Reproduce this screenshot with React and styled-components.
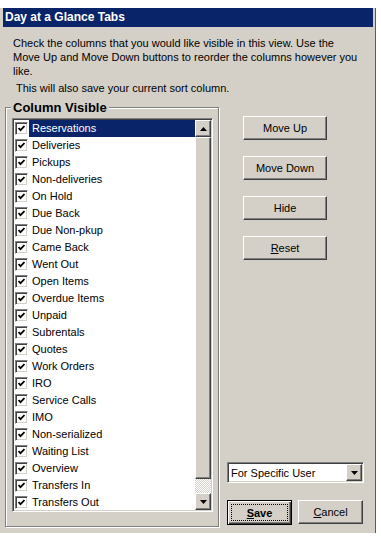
import React from "react";
import styled, { createGlobalStyle } from "styled-components";

const GlobalStyle = createGlobalStyle`
  html, body {
    margin: 0;
    background: #ffffff;
  }
  body {
    font-family: "Liberation Sans", Arial, sans-serif;
    font-size: 11px;
    color: #000;
  }
`;

const columns = [
  "Reservations",
  "Deliveries",
  "Pickups",
  "Non-deliveries",
  "On Hold",
  "Due Back",
  "Due Non-pkup",
  "Came Back",
  "Went Out",
  "Open Items",
  "Overdue Items",
  "Unpaid",
  "Subrentals",
  "Quotes",
  "Work Orders",
  "IRO",
  "Service Calls",
  "IMO",
  "Non-serialized",
  "Waiting List",
  "Overview",
  "Transfers In",
  "Transfers Out",
];

const Dialog = styled.div`
  margin-top: 8px;
  width: 376px;
  height: 525px;
  box-sizing: border-box;
  background: #d4d0c8;
  border-right: 1px solid #5a5a5a;
  display: flex;
  flex-direction: column;
`;

const TitleBar = styled.div`
  margin: 0 2px 0 3px;
  height: 19px;
  padding-left: 2px;
  background: #0a246a;
  color: #fff;
  font-weight: bold;
  font-size: 12px;
  line-height: 19px;
  white-space: nowrap;
`;

const Body = styled.div`
  flex: 1;
  display: flex;
  flex-direction: column;
  padding: 9px 0 6px 5px;
`;

const Intro = styled.p`
  margin: 0 0 0 8px;
  line-height: 14px;
  white-space: nowrap;
`;

const SortNote = styled.p`
  margin: 3px 0 0 11px;
  line-height: 14px;
`;

const MainRow = styled.div`
  flex: 1;
  display: flex;
  margin-top: 5px;
`;

const GroupBox = styled.div`
  position: relative;
  margin-top: 7px;
  width: 214px;
  box-sizing: border-box;
  padding: 10px 5px 14px 6px;
  border: 1px solid #808080;
  box-shadow: inset 1px 1px 0 #fff, 1px 1px 0 #fff;
`;

const GroupTitle = styled.span`
  position: absolute;
  top: -8px;
  left: 5px;
  padding: 0 2px;
  background: #d4d0c8;
  font-weight: bold;
  font-size: 13px;
  line-height: 15px;
`;

const ListBox = styled.div`
  width: 201px;
  height: 394px;
  box-sizing: border-box;
  display: flex;
  background: #fff;
  border: 1px solid;
  border-color: #808080 #fff #fff #808080;
  box-shadow: inset 1px 1px 0 #404040, inset -1px -1px 0 #d4d0c8;
  padding: 1px;
`;

const Items = styled.div`
  flex: 1;
  overflow: hidden;
`;

const Row = styled.div`
  display: flex;
  align-items: center;
  height: 17px;
`;

const CheckBox = styled.span`
  margin-left: 1px;
  width: 13px;
  height: 13px;
  box-sizing: border-box;
  flex: none;
  display: flex;
  align-items: center;
  justify-content: center;
  background: #fff;
  border: 1px solid;
  border-color: #808080 #fff #fff #808080;
  box-shadow: inset 1px 1px 0 #404040, inset -1px -1px 0 #d4d0c8;
`;

const Label = styled.span`
  flex: 1;
  margin-left: 1px;
  height: 17px;
  padding-left: 3px;
  line-height: 17px;
  white-space: nowrap;
  background: ${(p) => (p.$selected ? "#0a246a" : "transparent")};
  color: ${(p) => (p.$selected ? "#fff" : "#000")};
`;

const raised = `
  background: #d4d0c8;
  border: 1px solid;
  border-color: #fff #404040 #404040 #fff;
  box-shadow: inset -1px -1px 0 #808080;
`;

const ScrollBar = styled.div`
  width: 16px;
  display: flex;
  flex-direction: column;
`;

const ArrowButton = styled.div`
  ${raised}
  width: 16px;
  height: ${(p) => p.$h || 17}px;
  box-sizing: border-box;
  flex: none;
  display: flex;
  align-items: center;
  justify-content: center;
`;

const Thumb = styled.div`
  ${raised}
  height: 342px;
  box-sizing: border-box;
  flex: none;
`;

const Track = styled.div`
  flex: 1;
  background: repeating-conic-gradient(#d4d0c8 0 25%, #fff 0 50%) 0 0 / 2px 2px;
`;

const SideColumn = styled.div`
  width: 136px;
  margin-left: 8px;
  display: flex;
  flex-direction: column;
  padding-top: 16px;
`;

const ButtonStack = styled.div`
  margin-left: 16px;
  display: flex;
  flex-direction: column;
  gap: 16px;
`;

const PushButton = styled.button`
  ${raised}
  width: ${(p) => p.$w || 84}px;
  height: ${(p) => p.$h || 24}px;
  padding: 0;
  font-family: "Liberation Sans", Arial, sans-serif;
  font-size: 11px;
  color: #000;
  text-align: center;
`;

const DefaultButton = styled.button`
  width: 65px;
  height: 25px;
  padding: 3px;
  display: flex;
  background: #d4d0c8;
  border: 1px solid #000;
  box-shadow: inset 1px 1px 0 #fff, inset -1px -1px 0 #404040,
    inset -2px -2px 0 #808080;
  font-family: "Liberation Sans", Arial, sans-serif;
  font-size: 11px;
  font-weight: bold;
  color: #000;
`;

const FocusRing = styled.span`
  flex: 1;
  display: flex;
  align-items: center;
  justify-content: center;
  border: 1px dotted #000;
`;

const BottomGroup = styled.div`
  margin-top: auto;
  margin-bottom: 2px;
  display: flex;
  flex-direction: column;
  gap: 17px;
`;

const Select = styled.div`
  width: 137px;
  height: 21px;
  box-sizing: border-box;
  display: flex;
  align-items: center;
  background: #fff;
  border: 1px solid;
  border-color: #808080 #fff #fff #808080;
  box-shadow: inset 1px 1px 0 #404040, inset -1px -1px 0 #d4d0c8;
  padding: 1px;
`;

const SelectText = styled.span`
  flex: 1;
  padding-left: 2px;
  white-space: nowrap;
`;

const ButtonRow = styled.div`
  display: flex;
  gap: 6px;
  align-items: flex-start;
`;

const Arrow = ({ down }) => (
  <svg width="7" height="4" viewBox="0 0 7 4">
    <polygon points={down ? "0,0 7,0 3.5,4" : "3.5,0 7,4 0,4"} fill="#000" />
  </svg>
);

const Check = () => (
  <svg width="7" height="7" viewBox="0 0 7 7">
    <path d="M0.5 3 L2.5 5.2 L6.5 1" fill="none" stroke="#000" strokeWidth="1.8" />
  </svg>
);

const App = () => {
  return (
    <>
      <GlobalStyle />
      <Dialog>
        <TitleBar>Day at a Glance Tabs</TitleBar>
        <Body>
          <Intro>
            Check the columns that you would like visible in this view. Use the
            <br />
            Move Up and Move Down buttons to reorder the columns however you
            <br />
            like.
          </Intro>
          <SortNote>This will also save your current sort column.</SortNote>
          <MainRow>
            <GroupBox>
              <GroupTitle>Column Visible</GroupTitle>
              <ListBox>
                <Items>
                  {columns.map((name, i) => (
                    <Row key={name}>
                      <CheckBox>
                        <Check />
                      </CheckBox>
                      <Label $selected={i === 0}>{name}</Label>
                    </Row>
                  ))}
                </Items>
                <ScrollBar>
                  <ArrowButton>
                    <Arrow />
                  </ArrowButton>
                  <Thumb />
                  <Track />
                  <ArrowButton>
                    <Arrow down />
                  </ArrowButton>
                </ScrollBar>
              </ListBox>
            </GroupBox>
            <SideColumn>
              <ButtonStack>
                <PushButton>Move Up</PushButton>
                <PushButton>Move Down</PushButton>
                <PushButton>Hide</PushButton>
                <PushButton>
                  <u>R</u>eset
                </PushButton>
              </ButtonStack>
              <BottomGroup>
                <Select>
                  <SelectText>For Specific User</SelectText>
                  <ArrowButton $h={17}>
                    <Arrow down />
                  </ArrowButton>
                </Select>
                <ButtonRow>
                  <DefaultButton>
                    <FocusRing>
                      <u>S</u>ave
                    </FocusRing>
                  </DefaultButton>
                  <PushButton $w={65} $h={24}>
                    <u>C</u>ancel
                  </PushButton>
                </ButtonRow>
              </BottomGroup>
            </SideColumn>
          </MainRow>
        </Body>
      </Dialog>
    </>
  );
};

export default App;
